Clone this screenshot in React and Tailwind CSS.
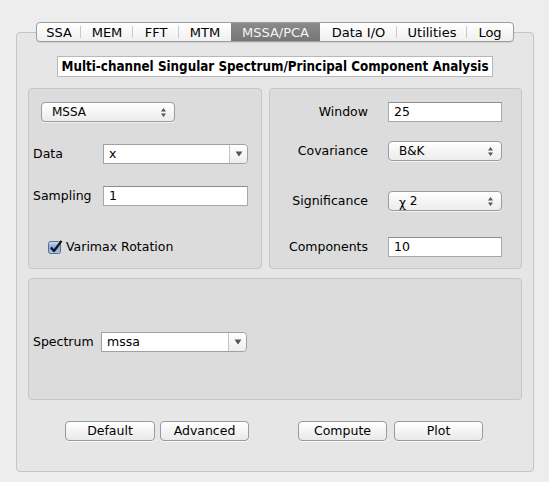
import React from "react";

const font = { fontFamily: '"DejaVu Sans", "Lucida Grande", sans-serif' };

function UpDown() {
  return (
    <svg width="7" height="11" viewBox="0 0 7 11" className="shrink-0">
      <path d="M3.5 1 L6 4.5 L1 4.5 Z" fill="#555" />
      <path d="M3.5 10 L6 6.5 L1 6.5 Z" fill="#555" />
    </svg>
  );
}

function Popup({ label, className }) {
  return (
    <div
      className={
        "flex items-center justify-between h-[20px] rounded-[4px] border border-[#9c9c9c] bg-gradient-to-b from-[#ffffff] to-[#ececec] pl-[10px] pr-[7px] shadow-[0_1px_0_rgba(255,255,255,0.6)] " +
        className
      }
    >
      <span className="text-[12px] text-black leading-none">{label}</span>
      <UpDown />
    </div>
  );
}

function Combo({ value, className }) {
  return (
    <div className={"flex h-[20px] border border-[#a0a0a0] rounded-r-[4px] bg-white " + className}>
      <div className="flex-1 flex items-center pl-[5px] text-[12.5px] text-black leading-none">{value}</div>
      <div className="w-[18px] flex items-center justify-center border-l border-[#c4c4c4] bg-gradient-to-b from-[#ffffff] to-[#ededed] rounded-r-[4px]">
        <svg width="8" height="6" viewBox="0 0 8 6">
          <path d="M0.5 0.5 L7.5 0.5 L4 5.5 Z" fill="#555" />
        </svg>
      </div>
    </div>
  );
}

function Field({ value, className }) {
  return (
    <div
      className={
        "flex items-center h-[20px] bg-white border border-[#a8a8a8] border-t-[#8e8e8e] pl-[5px] text-[12.5px] text-black leading-none " +
        className
      }
    >
      {value}
    </div>
  );
}

function Button({ label, className }) {
  return (
    <div
      className={
        "flex items-center justify-center h-[20px] rounded-[4px] border border-[#9a9a9a] bg-gradient-to-b from-[#ffffff] to-[#e9e9e9] text-[12.5px] text-black leading-none shadow-[0_1px_0_rgba(255,255,255,0.7)] " +
        className
      }
    >
      {label}
    </div>
  );
}

const tabs = [
  ["SSA", 45],
  ["MEM", 52],
  ["FFT", 46],
  ["MTM", 52],
  ["MSSA/PCA", 89],
  ["Data I/O", 77],
  ["Utilities", 70],
  ["Log", 47],
];

export default function App() {
  return (
    <div style={font} className="w-[549px] h-[482px] bg-[#ededed] pt-[22px] pl-[16px] overflow-hidden">
      <div className="w-[518px] flex flex-col">
        {/* tab bar */}
        <div className="relative z-10 self-center flex h-[20px] w-[478px] rounded-[4px] border border-[#9c9c9c] bg-gradient-to-b from-[#ffffff] to-[#f0f0f0] overflow-hidden shadow-[0_1px_1px_rgba(0,0,0,0.08)]">
          {tabs.map(([t, w], i) => {
            const sel = t === "MSSA/PCA";
            const nextSel = i + 1 < tabs.length && tabs[i + 1][0] === "MSSA/PCA";
            const showDivider = i < tabs.length - 1 && !sel && !nextSel;
            return (
              <div
                key={t}
                style={{ width: w - (i === 0 || i === tabs.length - 1 ? 1 : 0) }}
                className={
                  "relative flex items-center justify-center text-[13px] leading-none " +
                  (sel ? "bg-gradient-to-b from-[#8a8a8a] to-[#767676] text-[#f4f4f4]" : "text-black")
                }
              >
                {t}
                {showDivider && <div className="absolute right-0 top-[3px] bottom-[3px] w-px bg-[#c8c8c8]" />}
              </div>
            );
          })}
        </div>

        {/* main panel */}
        <div className="-mt-[10px] h-[440px] rounded-[4px] border border-[#c4c4c4] bg-[#e6e6e6] flex flex-col px-[11px]">
          <div className="self-center mt-[23px] w-[436px] h-[21px] bg-white border border-[#b8b8b8] flex items-center justify-center">
            <span
              style={{ fontFamily: '"DejaVu Sans Condensed", "DejaVu Sans", sans-serif' }}
              className="whitespace-nowrap text-[13.3px] font-bold text-black leading-none"
            >
              Multi-channel Singular Spectrum/Principal Component Analysis
            </span>
          </div>

          <div className="mt-[11px] flex gap-[7px]">
            {/* left group */}
            <div className="w-[234px] h-[181px] rounded-[4px] border border-[#c6c6c6] bg-[#dcdcdc] flex flex-col pl-[4px]">
              <Popup label="MSSA" className="ml-[8px] mt-[13px] w-[134px]" />
              <div className="mt-[22px] flex items-center">
                <span className="w-[70px] text-[12.5px] text-black">Data</span>
                <Combo value="x" className="w-[145px]" />
              </div>
              <div className="mt-[22px] flex items-center">
                <span className="w-[70px] text-[12.5px] text-black">Sampling</span>
                <Field value="1" className="w-[145px]" />
              </div>
              <div className="mt-[32px] ml-[15px] flex items-center gap-[2px]">
                <svg width="16" height="14" viewBox="0 0 16 14" className="shrink-0">
                  <defs>
                    <linearGradient id="cb" x1="0" y1="0" x2="0" y2="1">
                      <stop offset="0" stopColor="#c9dcf4" />
                      <stop offset="0.5" stopColor="#7fa8dc" />
                      <stop offset="1" stopColor="#a7c6ee" />
                    </linearGradient>
                  </defs>
                  <rect x="0.5" y="1.5" width="12" height="12" rx="2" fill="url(#cb)" stroke="#5a6f8c" />
                  <path d="M3 7.5 L6 11 L13.5 0.8" fill="none" stroke="#111" strokeWidth="2.2" strokeLinejoin="round" />
                </svg>
                <span className="text-[12.5px] text-black">Varimax Rotation</span>
              </div>
            </div>

            {/* right group */}
            <div className="w-[253px] h-[181px] rounded-[4px] border border-[#c6c6c6] bg-[#dcdcdc] flex flex-col pt-[13px]">
              <div className="flex items-center">
                <span className="w-[98px] text-right text-[12.5px] text-black">Window</span>
                <Field value="25" className="ml-[20px] w-[114px]" />
              </div>
              <div className="mt-[19px] flex items-center">
                <span className="w-[98px] text-right text-[12.5px] text-black">Covariance</span>
                <Popup label="B&K" className="ml-[20px] w-[114px]" />
              </div>
              <div className="mt-[30px] flex items-center">
                <span className="w-[98px] text-right text-[12.5px] text-black">Significance</span>
                <Popup label={<span><span className="relative top-[2px]">χ</span> 2</span>} className="ml-[20px] w-[114px]" />
              </div>
              <div className="mt-[26px] flex items-center">
                <span className="w-[98px] text-right text-[12.5px] text-black">Components</span>
                <Field value="10" className="ml-[20px] w-[114px]" />
              </div>
            </div>
          </div>

          {/* bottom group */}
          <div className="mt-[9px] w-[494px] h-[122px] rounded-[4px] border border-[#c6c6c6] bg-[#dcdcdc] flex items-center pl-[4px] pt-[6px]">
            <span className="w-[68px] text-[12.5px] text-black">Spectrum</span>
            <Combo value="mssa" className="w-[146px]" />
          </div>

          {/* buttons */}
          <div className="mt-[21px] flex pl-[37px]">
            <Button label="Default" className="w-[90px]" />
            <Button label="Advanced" className="ml-[5px] w-[89px]" />
            <Button label="Compute" className="ml-[49px] w-[89px]" />
            <Button label="Plot" className="ml-[7px] w-[89px]" />
          </div>
        </div>
      </div>
    </div>
  );
}
